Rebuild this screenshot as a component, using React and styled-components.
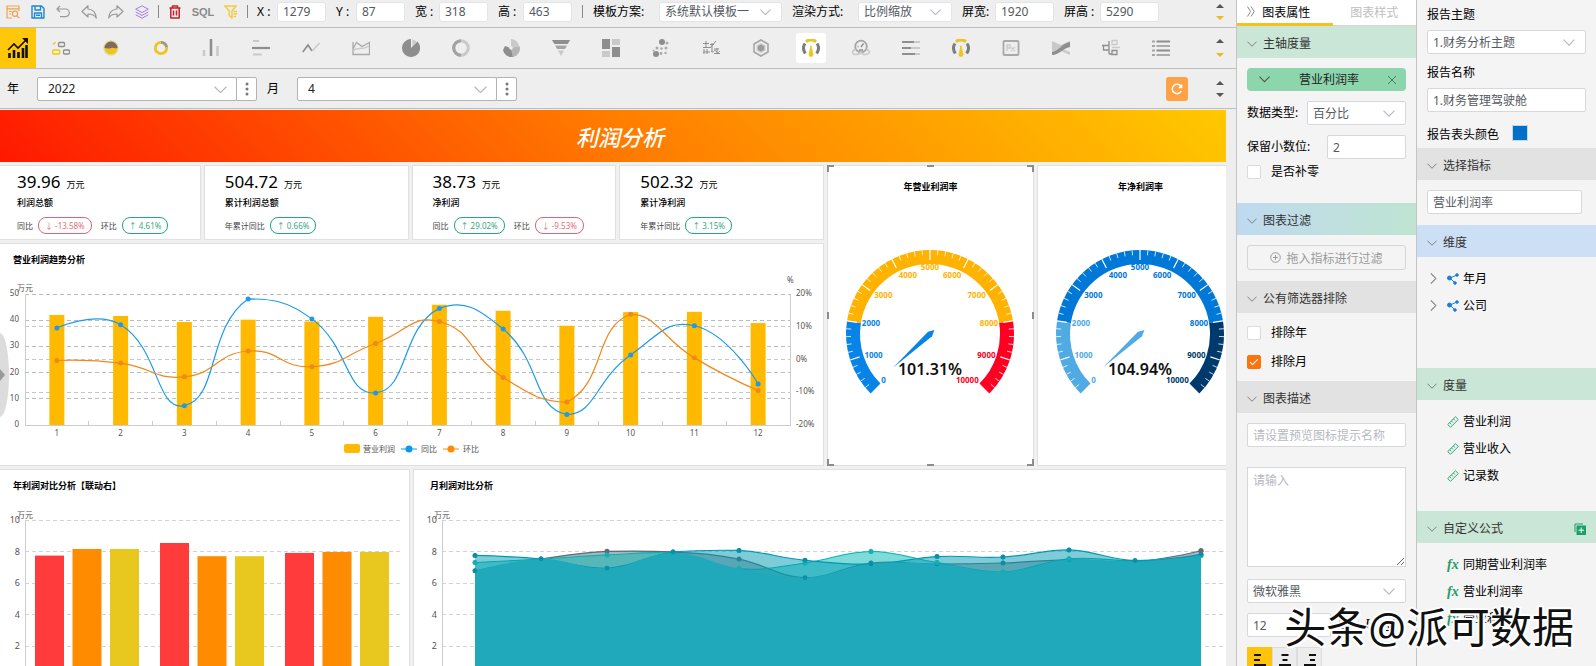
import React from "react";
import styled, { createGlobalStyle, css } from "styled-components";

const GlobalStyle = createGlobalStyle`
  *, *::before, *::after { box-sizing: border-box; }
  html, body { margin: 0; }
  body, button, input, select, textarea {
    font-family: "Noto Sans", "Noto Sans CJK SC", sans-serif;
    font-size: 12px;
    color: #000;
  }
  body { background: #eee; overflow: hidden; }
  h1, h2, p { margin: 0; }
  svg { display: block; }
`;

/* ---------- shell ---------- */
const Shell = styled.div`
  position: relative;
  display: flex;
  height: 100vh;
  overflow: hidden;
  line-height: 16px;
`;
const Main = styled.main`
  flex: 1;
  min-width: 0;
  display: flex;
  flex-direction: column;
  background: #eee;
`;
const Bar = styled.div`
  flex: none;
  display: flex;
  align-items: center;
  height: ${(p) => p.$h}px;
  border-bottom: 1px solid #bdbdbd;
  padding-right: 9px;
`;
const ToolBar = styled(Bar)`
  padding-left: 6px;
  padding-bottom: 4px;
`;
const ToolGroup = styled.div`
  display: flex;
  align-items: center;
  gap: 11px;
`;
const plainButton = css`
  display: flex;
  align-items: center;
  justify-content: center;
  border: 0;
  padding: 0;
  background: none;
`;
const ToolButton = styled.button`
  ${plainButton}
  width: ${(p) => p.$w || 14}px;
  height: 18px;
`;
const SqlLabel = styled.span`
  font-family: "Liberation Sans Narrow", "Liberation Sans", sans-serif;
  font-size: 11px;
  font-weight: 700;
  color: #8a8a8a;
`;
const Divider = styled.span`
  width: 1px;
  height: 13px;
  margin: 0 ${(p) => p.$gap}px;
  background: #888;
`;
const Fields = styled.div`
  display: flex;
  align-items: center;
  gap: 10px;
`;
const FieldLabel = styled.label`
  display: flex;
  align-items: center;
  white-space: nowrap;
`;
const FieldName = styled.span`
  width: ${(p) => p.$w}px;
`;
const TextBox = styled.input`
  display: block;
  flex: none;
  width: ${(p) => (p.$w ? p.$w + "px" : "100%")};
  height: ${(p) => p.$h || 24}px;
  padding: 0 5px;
  border: 1px solid ${(p) => p.$line || "#d6d8dc"};
  border-radius: ${(p) => p.$r || 2}px;
  background: #fff;
  color: #555a62;
  outline: 0;
  &::placeholder { color: #b6b9bf; }
`;
const SelectWrap = styled.span`
  position: relative;
  display: block;
  width: ${(p) => (p.$w ? p.$w + "px" : "100%")};
  svg { position: absolute; right: ${(p) => p.$arrow || 11}px; top: 50%; margin-top: -3px; pointer-events: none; }
`;
const SelectBox = styled.select`
  display: block;
  appearance: none;
  width: 100%;
  height: ${(p) => p.$h || 24}px;
  padding: 0 5px;
  border: 1px solid ${(p) => p.$line || "#d6d8dc"};
  border-radius: ${(p) => p.$r || 2}px;
  background: #fff;
  color: ${(p) => p.$ink || "#555a62"};
  outline: 0;
  padding-left: ${(p) => p.$pad || 5}px;
`;
const Spinner = styled.div`
  margin-left: auto;
  display: flex;
  flex-direction: column;
  align-items: center;
  gap: ${(p) => p.$gap}px;
  width: 14px;
`;
const SpinButton = styled.button`
  ${plainButton}
  width: 14px;
  height: 4px;
`;

const Chevron = ({ w = 12, color = "#b4b8be" }) => (
  <svg width={w} height={w / 2 + 1} viewBox="0 0 12 7" fill="none" stroke={color} strokeWidth="1.1">
    <path d="M0.5 0.7 6 6.2 11.5 0.7" />
  </svg>
);
const ExpandArrow = () => (
  <svg width="10" height="11" viewBox="-3 0 10 12" fill="none" stroke="#777" strokeWidth="1.1"><path d="M0.7 0.5 6.2 6 0.7 11.5" /></svg>
);

function Select({ id, value, w, arrow, aw, label, ...rest }) {
  return (
    <SelectWrap $w={w} $arrow={arrow}>
      <SelectBox id={id} defaultValue={value} aria-label={label} {...rest}>
        <option>{value}</option>
      </SelectBox>
      <Chevron w={aw} />
    </SelectWrap>
  );
}

function UpDown({ gap, up = "#555", down = "#e8bc1c" }) {
  return (
    <Spinner $gap={gap}>
      <SpinButton aria-label="上移"><svg width="8" height="4"><path d="M4 0 8 4H0z" fill={up} /></svg></SpinButton>
      <SpinButton aria-label="下移"><svg width="8" height="4"><path d="M0 0H8L4 4z" fill={down} /></svg></SpinButton>
    </Spinner>
  );
}

/* ---------- top tool icons ---------- */
const Line = ({ c, w = 14, children, sw = 1.2 }) => (
  <svg width={w} height="14" viewBox={`0 0 ${w} 14`} fill="none" stroke={c} strokeWidth={sw} strokeLinejoin="round">{children}</svg>
);
const editTools = [
  ["预览", 14, <Line c="#f0a24a"><path d="M13 6V1H1v12h5M1 3.8h12M3 6.5h3M3 9h2" /><circle cx="9" cy="8.7" r="2.6" /><path d="m11 10.8 2.3 2.4" /></Line>],
  ["保存", 14, <Line c="#1e88d0" sw={1.4}><path d="M1 1h9.5L13 3.500V13H1zM4 1v4h5.500V1M3.500 13V8h7v5M5 10.200h4" /></Line>],
  ["撤销", 14, <Line c="#999"><path d="M4 .8 1 4l3 3M1 4h8.500a3.800 3.800 0 0 1 0 7.600H4" /></Line>],
  ["后退", 16, <Line c="#999" w={16}><path d="M7 .8 1 6.500l6 5.500V9c4 0 6.500 1 8.300 4C15 8.500 12.500 4.500 7 4z" /></Line>],
  ["前进", 16, <Line c="#999" w={16}><path d="m9 .8 6 5.700L9 12V9C5 9 2.500 10 .7 13 1 8.500 3.500 4.500 9 4z" /></Line>],
  ["图层", 14, <Line c="#a47be0" sw={1}><path d="M7 .8 13.300 4.200 7 7.600.7 4.200zM.7 7 7 10.400 13.300 7M.7 9.800 7 13.200l6.300-3.400" /></Line>],
];
const TrashIcon = () => <Line c="#c8202c" sw={1.5}><path d="M1.500 3h11M4.500 2.800V1h5v1.800M2.800 3v10h8.400V3M5.500 5.500v5M8.500 5.500v5" /></Line>;
const FilterIcon = () => <Line c="#f0cc3c" sw={1.4}><path d="M.8 1h11.400L8 5.800V13L5.200 10.500V5.800zM9.500 6.500H13M9.500 9H13M9.500 11.500H12" /></Line>;

/* ---------- chart type icons ---------- */
const G = "#8e8e8e";
const L = "#c9c9c9";
const Y = "#ecc51e";
const Ic = ({ children }) => <svg width="18" height="18" viewBox="0 0 18 18" fill="none" stroke={G} strokeWidth="1.3">{children}</svg>;
const GaugeIcon = () => (
  <Ic>
    <path d="M4 2.600Q9 -.6 14 2.600" stroke={Y} strokeWidth="3.200" />
    <path d="M3 4.500Q-.2 9 3.300 14.500M15 4.500Q18.200 9 14.700 14.500" stroke="#7d7d7d" strokeWidth="3" />
    <path d="M9 6.500l2 9a2 2 0 0 1-4 0z" fill={Y} stroke={Y} strokeWidth=".8" />
  </Ic>
);
const chartTypes = [
  ["组合", <Ic><rect x="6.500" y="3.500" width="6" height="4" rx="1" /><rect x="11.500" y="11" width="6" height="4" rx="1" /><rect x=".7" y="11" width="7" height="4" rx="1" stroke={Y} fill="#fff3b8" /><path d="M1 5.500 3.500 3" stroke={Y} /></Ic>],
  ["水球图", <Ic><circle cx="9" cy="9" r="7" fill={Y} stroke="#e6d9a0" /><path d="M2.500 9a6.500 6.500 0 0 1 13 0c-3 1-4-.8-6.500 0s-4 .5-6.500 0z" fill="#806a60" stroke="none" /></Ic>],
  ["环形进度", <Ic><circle cx="9" cy="9" r="5.700" stroke={Y} strokeWidth="2.800" /><path d="M9 3.300A5.700 5.700 0 0 1 14.600 8" stroke="#999" strokeWidth="2.800" /></Ic>],
  ["柱状图", <Ic><path d="M2 11v6M15.500 7v10" stroke={L} strokeWidth="2.500" /><path d="M9 0v17" strokeWidth="2.500" /></Ic>],
  ["条形图", <Ic><path d="M1 2h6M1 15.500h9" stroke={L} strokeWidth="2" /><path d="M0 9h18" strokeWidth="2.200" /></Ic>],
  ["折线图", <Ic><path d="M.8 13 6 6l4 6" strokeWidth="1.700" /><path d="m10 12 7.500-8" stroke={L} strokeWidth="1.700" /></Ic>],
  ["面积图", <Ic><path d="M1 3v12.500h16.500V3.500L10 7.500 4.500 3.500 1 10" stroke="#a9a9a9" /><path d="M1 12c4-5 9 0 16-5" stroke={L} /></Ic>],
  ["饼图", <Ic><path d="M9 9V0a9 9 0 1 0 6.400 2.600z" fill={G} stroke="none" /><path d="M10.500 7V.6a8 8 0 0 1 4 2.200z" fill={L} stroke="none" /></Ic>],
  ["圆环图", <Ic><circle cx="9" cy="9" r="7.300" stroke={L} strokeWidth="3" /><path d="M9 16.300a7.300 7.300 0 0 1 0-14.600" strokeWidth="3" stroke="#a2a2a2" /></Ic>],
  ["玫瑰图", <Ic><path d="M9 9V0a8 8 0 0 1 8 7z" fill={L} stroke="none" /><path d="M9 9l8.500-2A8.500 8.500 0 0 1 11 18z" fill="#b5b5b5" stroke="none" /><path d="M9 9l2 9A8.500 8.500 0 0 1 1 11l2-4z" fill={G} stroke="none" /><circle cx="9" cy="9" r="1.800" fill="#eee" stroke="none" /></Ic>],
  ["漏斗图", <Ic><path d="M0 1h18l-2.300 4H2.300z" fill={G} stroke="none" /><path d="M3 6.500h12L13 10H5z" fill="#a5a5a5" stroke="none" /><path d="M6 11.500h6L9 17z" fill={L} stroke="none" /></Ic>],
  ["矩形树图", <Ic><path d="M0 0h8v10H0zM10 8h8v10h-8z" fill={G} stroke="none" /><path d="M10 0h8v6h-8zM0 12h8v6H0z" fill={L} stroke="none" /></Ic>],
  ["散点图", <Ic><g stroke="none" fill={G}><circle cx="10" cy="3" r="3" /><circle cx="4" cy="15" r="3" /></g><g stroke="none" fill="#aaa"><circle cx="15" cy="4" r="1.500" /><circle cx="5" cy="9" r="1.500" /><circle cx="9.500" cy="9.500" r="1.300" /><circle cx="14" cy="9" r="1.500" /><circle cx="9" cy="14.500" r="1.400" /><circle cx="13.500" cy="14" r="1.200" /><circle cx="1.500" cy="11.500" r="1" /></g></Ic>],
  ["词云", <Ic><path d="M1 4.500h6M4 2v6M1 8.500h7M8 9l6-7M8 5.500h4M10 4v9M1 13h7M2 10v5M5 10v5M9 12c2 3 3-2 5 0s2 2 4 0M12 14.500h6M15 9v6M12 10h5" strokeWidth="1" /></Ic>],
  ["雷达图", <Ic><path d="M9 1l7 4v8l-7 4-7-4V5z" stroke="#a5a5a5" strokeWidth="1.600" /><path d="M9 4.800l3.800 2.100v4.200L9 13.200l-3.800-2.100V6.900z" fill="#9b9b9b" stroke={L} /></Ic>],
  ["仪表盘", <GaugeIcon />],
  ["速度表", <Ic><circle cx="9" cy="7.500" r="5.800" stroke="#a5a5a5" strokeWidth="1.800" /><path d="M9 8l2.500-3.500M5.500 7.500h1M7 11h4" /><path d="M3.500 10.500c-5 2-3 5.500 1 5S9 12.500 9 12.500s.5 3.500 4.500 3 6-3 1-5" stroke={L} strokeWidth="1.600" /></Ic>],
  ["进度条", <Ic><path d="M0 3h12M0 9h9M0 15h13" strokeWidth="2.200" /><path d="M12 3h6M9 9h9M13 15h5" stroke={L} strokeWidth="2.200" /></Ic>],
  ["仪表组", <GaugeIcon />],
  ["文本框", <Ic><rect x="1.500" y="2" width="15" height="14" rx="1" stroke="#a9a9a9" strokeWidth="1.800" /><path d="M5 12V6h3v3H5M9 12l4-4M9.500 8.500 13 12" stroke={L} /></Ic>],
  ["桑基图", <Ic><path d="M0 2l9 4 9-4v4l-7 4 7 3v3L9 12l-9 4z" fill={L} stroke="none" /><path d="M0 13c6 0 10-9 18-10v5c-7 1-11 8-18 8z" fill={G} stroke="none" /></Ic>],
  ["组织树", <Ic><path d="M0 6.500h7v4.500H1.500V6.500M7 2v13M7 15h3" /><path d="M10 1.500h5v4h-5zM10 8.500h8" stroke={L} /><path d="M10 11.500h5v4h-5z" /></Ic>],
  ["列表", <Ic><path d="M0 2.500h3M0 7h3M0 11.500h3M0 16h3" stroke="#a5a5a5" strokeWidth="1.800" /><path d="M4.500 2.500H18M4.500 11.500H18" strokeWidth="2" /><path d="M4.500 7H18M4.500 16H18" stroke="#ababab" strokeWidth="2" /></Ic>],
];
const ChartTile = styled.button`
  ${plainButton}
  width: 36px;
  height: 40px;
  margin-right: 10px;
  background: #ffc70a;
`;
const TypeList = styled.div`
  display: flex;
  gap: 20px;
`;
const TypeButton = styled.button`
  ${plainButton}
  width: 30px;
  height: 30px;
  border-radius: 3px;
  background: ${(p) => (p.$on ? "#fff" : "none")};
`;

/* ---------- filter bar ---------- */
const FilterBar = styled(Bar)`
  padding-left: 7px;
`;
const FilterField = styled.div`
  display: flex;
  align-items: center;
  margin-right: 10px;
  label { width: 30px; }
`;
const MoreButton = styled.button`
  ${plainButton}
  width: 21px;
  height: 24px;
  margin-left: -1px;
  background: #fff;
  border: 1px solid #b3b3b3;
  border-radius: 0 2px 2px 0;
`;
const RefreshButton = styled.button`
  ${plainButton}
  width: 22px;
  height: 24px;
  margin-left: auto;
  margin-right: 25px;
  border-radius: 3px;
  background: #ffa145;
`;
const FilterSpin = styled.div`
  display: flex;
`;

/* ---------- dashboard ---------- */
const Stage = styled.div`
  position: relative;
  flex: 1;
  min-height: 0;
  margin-right: 10px;
  padding-top: 1px;
  overflow: hidden;
  background: #f0f0f0;
`;
const Canvas = styled.div`
  display: flex;
  flex-direction: column;
  gap: 3px;
  width: calc(100% + 22px);
  margin-left: -4px;
`;
const Banner = styled.h1`
  height: 52px;
  line-height: 54px;
  text-align: center;
  color: #fff;
  font-size: 22px;
  font-weight: 500;
  font-style: italic;
  background: linear-gradient(45deg, #ff1800 0%, #ff7c00 50%, #ffc800 98%);
`;
const Row = styled.div`
  display: flex;
  gap: 3px;
`;
const Column = styled.div`
  flex: 1;
  min-width: 0;
  display: flex;
  flex-direction: column;
  gap: 3px;
`;
const Card = styled.section`
  position: relative;
  flex: ${(p) => (p.$w ? `0 0 ${p.$w}px` : "1")};
  min-width: 0;
  background: #fff;
  border: 1px solid #e0e0e0;
  svg { overflow: visible; }
`;
const CardTitle = styled.h2`
  height: ${(p) => p.$h || 32}px;
  line-height: ${(p) => p.$h || 32}px;
  padding-left: ${(p) => (p.$center ? 0 : 16)}px;
  text-align: ${(p) => (p.$center ? "center" : "left")};
  font-size: 9px;
  font-weight: 700;
`;
const KpiGrid = styled.div`
  display: grid;
  grid-template-columns: repeat(4, 1fr);
  gap: 3px;
`;
const Kpi = styled(Card)`
  display: flex;
  flex-direction: column;
  height: 75px;
  padding: 6px 0 0 20px;
`;
const KpiValue = styled.p`
  font-size: 17px;
  line-height: 20px;
  small { margin-left: 6px; font-size: 9px; }
`;
const KpiName = styled.p`
  font-size: 9px;
  line-height: 16px;
  font-weight: 500;
`;
const KpiRates = styled.div`
  display: flex;
  align-items: center;
  gap: 5px;
  margin-top: 6px;
  font-size: 8px;
  line-height: 15px;
  color: #444;
`;
const Rate = styled.span`
  height: 17px;
  padding: 0 6px;
  margin-right: 4px;
  border: 1px solid ${(p) => (p.$up ? "#1fa97c" : "#d9667a")};
  border-radius: 8px;
  color: ${(p) => (p.$up ? "#3aa882" : "#e0707c")};
`;
const DrawerHandle = styled.button`
  ${plainButton}
  position: absolute;
  left: 0;
  top: 224px;
  width: 9px;
  height: 84px;
  justify-content: flex-start;
  background: #dcdcdc;
  border-radius: 0 9px 9px 0 / 0 42px 42px 0;
`;
const Grip = styled.i`
  position: absolute;
  width: ${(p) => (p.$edge === "y" ? 2 : 7)}px;
  height: ${(p) => (p.$edge === "x" ? 2 : 7)}px;
  ${(p) => p.$edge && "background: #8d8d8d;"}
  ${(p) => (p.$t ? "top: -1px;" : p.$b ? "bottom: -1px;" : "top: calc(50% - 4px);")}
  ${(p) => (p.$l ? "left: -1px;" : p.$r ? "right: -1px;" : "left: calc(50% - 4px);")}
  ${(p) => !p.$edge && css`
    border: 0 solid #8d8d8d;
    border-top-width: ${p.$t ? 2 : 0}px;
    border-bottom-width: ${p.$b ? 2 : 0}px;
    border-left-width: ${p.$l ? 2 : 0}px;
    border-right-width: ${p.$r ? 2 : 0}px;
  `}
`;
const Plot = styled.svg`
  width: 100%;
  height: auto;
  font-size: ${(p) => p.$font || 8}px;
  fill: #555;
`;
const GridLine = styled.path`
  fill: none;
  stroke: ${(p) => p.$c || "#ccc"};
  stroke-dasharray: ${(p) => (p.$solid ? "none" : "4 3")};
  shape-rendering: crispEdges;
`;

const kpis = [
  ["39.96", "利润总额", [["同比", false, "-13.58%"], ["环比", true, "4.61%"]]],
  ["504.72", "累计利润总额", [["年累计同比", true, "0.66%"]]],
  ["38.73", "净利润", [["同比", true, "29.02%"], ["环比", false, "-9.53%"]]],
  ["502.32", "累计净利润", [["年累计同比", true, "3.15%"]]],
];

// Cubic smoothing whose control points stay inside the bounding box of the series.
function smoothPath(pts, smooth = 0.5) {
  const xs = pts.map((p) => p[0]);
  const ys = pts.map((p) => p[1]);
  const clamp = ([x, y]) => [
    Math.min(Math.max(x, Math.min(...xs)), Math.max(...xs)),
    Math.min(Math.max(y, Math.min(...ys)), Math.max(...ys)),
  ];
  let d = `M${pts[0].join(" ")}`;
  let cp0 = pts[0];
  for (let i = 1; i < pts.length; i++) {
    const p = pts[i];
    const prev = pts[i - 1];
    const next = pts[i + 1];
    let cp1 = p;
    let nextCp = p;
    if (next) {
      const a = Math.hypot(p[0] - prev[0], p[1] - prev[1]);
      const b = Math.hypot(next[0] - p[0], next[1] - p[1]);
      const r = b / (a + b);
      const v = [next[0] - prev[0], next[1] - prev[1]];
      cp1 = clamp([p[0] - v[0] * smooth * (1 - r), p[1] - v[1] * smooth * (1 - r)]);
      nextCp = clamp([p[0] + v[0] * smooth * r, p[1] + v[1] * smooth * r]);
    }
    d += `C${cp0.join(" ")} ${cp1.join(" ")} ${p.join(" ")}`;
    cp0 = nextCp;
  }
  return d;
}

const trend = {
  profit: [42, 41.6, 39.3, 40.2, 39.5, 41.3, 45.9, 43.6, 37.9, 43.1, 43.2, 38.9],
  yoy: [9.6, 10.6, -14.1, 18.5, 12.4, -10.2, 15.6, 9.3, -16.8, 1.4, 10.3, -7.5],
  mom: [-0.3, -1.1, -5.3, 2.6, -2.2, 4.9, 11.6, -5.5, -13, 13.8, 0.5, -9.5],
};

function TrendChart() {
  const x0 = 28, x1 = 793, top = 18, bottom = 149;
  const step = (x1 - x0) / 12;
  const cx = (i) => x0 + step * (i + 0.5);
  const yL = (v) => bottom - (v / 50) * (bottom - top);
  const yR = (v) => bottom - ((v + 20) / 40) * (bottom - top);
  const line = (vals) => vals.map((v, i) => [cx(i), yR(v)]);
  return (
    <Plot viewBox="0 0 826 189" role="img" aria-label="营业利润趋势分析">
      {[10, 20, 30, 40, 50].map((v) => <GridLine key={v} d={`M${x0} ${yL(v)}H${x1}`} $c="#bbb" />)}
      {[-10, 0, 10].map((v) => <GridLine key={v} d={`M${x0} ${yR(v)}H${x1}`} $c="#c8c8c8" />)}
      <GridLine $solid d={`M${x0} ${top}V${bottom}H${x1}V${top}`} />
      {trend.profit.map((v, i) => (
        <g key={i}>
          {i > 0 && <GridLine $solid d={`M${x0 + step * i} ${bottom}v-4`} />}
          <rect x={cx(i) - 7.5} y={yL(v)} width="15" height={bottom - yL(v)} fill="#ffb900" />
          <text x={cx(i)} y={bottom + 11} textAnchor="middle">{i + 1}</text>
        </g>
      ))}
      {[[trend.yoy, "#1e9be8"], [trend.mom, "#f0881c"]].map(([vals, c]) => (
        <g key={c}>
          <path d={smoothPath(line(vals))} fill="none" stroke={c} strokeWidth="1.200" />
          {line(vals).map(([x, y]) => <circle key={x} cx={x} cy={y} r="2.500" fill={c} />)}
        </g>
      ))}
      {[0, 10, 20, 30, 40, 50].map((v) => <text key={v} x="22" y={yL(v) + 2} textAnchor="end">{v}</text>)}
      {[-20, -10, 0, 10, 20].map((v) => <text key={v} x="799" y={yR(v) + 2}>{v}%</text>)}
      <text x="20" y="15">万元</text>
      <text x="790" y="7">%</text>
      <rect x="347" y="168" width="16" height="9" rx="2" fill="#ffb900" />
      <text x="366" y="176">营业利润</text>
      <path d="M404 173h16" stroke="#0a9be6" /><circle cx="412" cy="173" r="3.500" fill="#0a9be6" />
      <text x="424" y="176">同比</text>
      <path d="M446 173h16" stroke="#ff8c00" /><circle cx="454" cy="173" r="3.500" fill="#ff8c00" />
      <text x="466" y="176">环比</text>
    </Plot>
  );
}

function Gauge({ rate, colors, label }) {
  const cx = 102, cy = 127, R = 84, W = 14;
  const rad = (v) => ((225 - v * 270) * Math.PI) / 180;
  const at = (v, r) => [cx + Math.cos(rad(v)) * r, cy - Math.sin(rad(v)) * r];
  const arc = (a, b) => {
    const big = (b - a) * 270 > 180 ? 1 : 0;
    const n = R - W;
    return `M${at(a, R)}A${R} ${R} 0 ${big} 1 ${at(b, R)}L${at(b, n)}A${n} ${n} 0 ${big} 0 ${at(a, n)}Z`;
  };
  const pick = (v) => (v <= 0.2 ? colors[0] : v <= 0.8 ? colors[1] : colors[2]);
  const a = rad(parseFloat(rate) / 10000);
  const c = Math.cos(a), s = -Math.sin(a);
  const needle = [[cx - c * 6, cy - s * 6], [cx - s * 3, cy + c * 3], [cx + c * 50, cy + s * 50], [cx + s * 3, cy - c * 3]];
  return (
    <Plot viewBox="0 0 205 256" role="img" aria-label={label}>
      <path d={arc(0, 0.2)} fill={colors[0]} />
      <path d={arc(0.2, 0.8)} fill={colors[1]} />
      <path d={arc(0.8, 1)} fill={colors[2]} />
      {Array.from({ length: 49 }, (_, k) => k + 1).map((k) => (
        <path key={k} d={`M${at(k / 50, R)}L${at(k / 50, k % 5 ? R - 5 : R - 10)}`} stroke="#fff" strokeWidth={k % 5 ? 0.8 : 1.2} />
      ))}
      {Array.from({ length: 11 }, (_, k) => k).map((k) => {
        const ux = Math.cos(rad(k / 10)), uy = -Math.sin(rad(k / 10));
        const [x, y] = at(k / 10, 69);
        return (
          <text key={k} x={x} y={y + (uy < -0.4 ? 5 : uy > 0.4 ? 0 : 3)} textAnchor={ux < -0.4 ? "start" : ux > 0.4 ? "end" : "middle"}
            fill={pick(k / 10)} fontWeight="700">{k * 1000}</text>
        );
      })}
      <path d={`M${needle.join("L")}Z`} fill={colors[0]} />
      <text x={cx} y="168" textAnchor="middle" fill="#111" fontSize="16" fontWeight="600">{rate}</text>
    </Plot>
  );
}

const yearBars = [[7.74, 8.16, 8.16], [8.54, 7.7, 7.7], [7.91, 7.97, 7.97]];
const barColors = ["#ff3b3b", "#ff8c00", "#e8c81e"];
const GRID = { top: 18, unit: 15.75 };
const valueY = (v) => GRID.top + (10 - v) * GRID.unit;

function ValueAxis({ x0, x1 }) {
  return (
    <>
      {[2, 4, 6, 8, 10].map((v) => (
        <g key={v}>
          <GridLine d={`M${x0} ${valueY(v)}H${x1}`} $c="#d2d2d2" />
          <text x={x0 - 5} y={valueY(v) + 3} textAnchor="end">{v}</text>
        </g>
      ))}
      <GridLine $solid d={`M${x0} ${GRID.top}V${valueY(0)}`} />
      <text x={x0 - 8} y="16" fontSize="8">万元</text>
    </>
  );
}

function YearChart() {
  return (
    <Plot viewBox="0 0 412 180" $font={9} role="img" aria-label="年利润对比分析">
      <ValueAxis x0={28} x1={403} />
      {yearBars.map((g, i) => g.map((v, j) => (
        <rect key={`${i}${j}`} x={28 + i * 125 + 10 + j * 37.5} y={valueY(v)} width="29" height={valueY(0) - valueY(v)} fill={barColors[j]} />
      )))}
    </Plot>
  );
}

const areas = [
  ["#5d6a78", 0.5, [6.78, 7.52, 8.01, 7.97, 7.52, 6.33, 7.27, 7.2, 7.27, 7.47, 7.35, 8.05]],
  ["#00b7b5", 0.5, [7.3, 7.52, 7.78, 7.9, 6.9, 7.27, 8.0, 7.3, 6.7, 7.54, 7.42, 7.74]],
  ["#0099b4", 0.5, [7.75, 7.52, 6.93, 7.97, 8.07, 7.44, 7.2, 7.68, 7.65, 8.1, 7.42, 7.82]],
];

function MonthChart() {
  const x0 = 28, step = 66;
  const shapes = areas.map(([c, o, vals]) => {
    const pts = vals.map((v, i) => [x0 + step * (i + 0.5), valueY(v)]);
    return { c, o, pts, d: smoothPath(pts, 0.4) };
  });
  const floor = shapes[0].pts.map(([x], i) => [x, valueY(Math.min(...areas.map((s) => s[2][i])))]);
  return (
    <Plot viewBox="0 0 829 180" $font={9} role="img" aria-label="月利润对比分析">
      <ValueAxis x0={x0} x1={822} />
      {shapes.map(({ c, o, pts, d }) => (
        <g key={c}>
          <path d={`${d}V${valueY(0)}H${pts[0][0]}Z`} fill={c} fillOpacity={o} />
          <path d={d} fill="none" stroke={c} strokeWidth="1.200" />
          {pts.map(([x, y]) => <circle key={x} cx={x} cy={y} r="2.500" fill={c} />)}
        </g>
      ))}
      <path d={`${smoothPath(floor, 0.4)}V${valueY(0)}H${floor[0][0]}Z`} fill="#1fa9bb" />
      {shapes.map(({ c, pts }, k) => (k === 0 ? pts.slice(0, 1).concat(pts.slice(5, 10)) : pts).map(([x, y]) => (
        <circle key={c + x} cx={x} cy={y} r="2.200" fill={k === 1 ? "#14b0b4" : "#0c8fa6"} />
      )))}
      <circle cx={shapes[0].pts[11][0]} cy={shapes[0].pts[11][1]} r="2.500" fill="#5d6a78" />
    </Plot>
  );
}

/* ---------- side panels ---------- */
const Panel = styled.aside`
  flex: none;
  width: ${(p) => p.$w}px;
  background: #f4f4f4;
  border-left: 1px solid #c4c4c4;
`;
const Tabs = styled.div`
  display: flex;
  height: 26px;
  background: #fff;
  border-bottom: 1px solid #d5d5d5;
`;
const Tab = styled.button`
  ${plainButton}
  flex: 1 1 0;
  gap: 7px;
  min-width: 0;
  height: 26px;
  white-space: nowrap;
  color: ${(p) => (p.$on ? "#000" : "#c0c0c0")};
  ${(p) => (p.$on ? "border-bottom: 3px solid #f5c31c; padding: 0 12px 0 0;" : "padding: 0 0 2px;")}
`;
const backgrounds = {
  green: "#c9e6d6",
  grey: "#e2e2e2",
  blue: "#ccdff5",
  mix: "linear-gradient(90deg, #bfdaf0, #bfe4d2)",
};
const SectionHead = styled.h2`
  display: flex;
  align-items: center;
  gap: 6px;
  height: 32px;
  padding: 3px 10px 0;
  background: ${(p) => backgrounds[p.$tone]};
  font-size: 12px;
  font-weight: 400;
  color: #333;
  button { ${plainButton} margin-left: auto; }
`;
const SectionBody = styled.div`
  display: flex;
  flex-direction: column;
  height: ${(p) => p.$h}px;
  padding: 10px 10px 0;
  gap: ${(p) => p.$gap || 0}px;
`;
const Stack = styled.div`
  display: flex;
  flex-direction: column;
  gap: 6px;
`;
const Pill = styled.div`
  display: flex;
  align-items: center;
  justify-content: space-between;
  height: 23px;
  padding: 0 10px 0 12px;
  border-radius: 4px;
  background: #8cd5ad;
  color: #222;
  button { ${plainButton} }
`;
const FormRow = styled.div`
  display: flex;
  align-items: center;
  height: 24px;
  label { white-space: nowrap; width: ${(p) => p.$lw}px; flex: none; }
  input { flex: ${(p) => (p.$lw ? 1 : "none")}; min-width: 0; }
`;
const CheckLabel = styled.label`
  display: flex;
  align-items: center;
  gap: 10px;
  height: ${(p) => p.$h || 14}px;
`;
const Check = styled.input`
  appearance: none;
  position: relative;
  width: 14px;
  height: 14px;
  margin: 0;
  border: 1px solid #d9dbdf;
  border-radius: 2px;
  background: #fff;
  &:checked { background: #fa7510; border-color: #fa7510; }
  &:checked::after {
    content: "";
    position: absolute;
    left: 4px;
    top: 1px;
    width: 4px;
    height: 8px;
    border: solid #fff;
    border-width: 0 1px 1px 0;
    transform: rotate(45deg);
  }
`;
const DropButton = styled.button`
  display: flex;
  align-items: center;
  justify-content: center;
  gap: 5px;
  height: 25px;
  border: 1px solid #d5d5d5;
  border-radius: 3px;
  background: #f4f4f4;
  color: #9a9a9a;
`;
const Notes = styled.textarea`
  display: block;
  width: 100%;
  height: 100px;
  margin: 10px 0 2px;
  padding: 5px;
  border: 1px solid #d6d8dc;
  border-radius: 0;
  line-height: 16px;
  outline: 0;
  &::placeholder { color: #b6b9bf; }
`;
const StyleButton = styled.button`
  ${plainButton}
  width: 24px;
  height: 24px;
  font: ${(p) => p.$font} 14px "Liberation Serif", serif;
  text-decoration: ${(p) => (p.$under ? "underline" : "none")};
`;
const AlignGroup = styled.div`
  display: flex;
`;
const AlignButton = styled.button`
  ${plainButton}
  width: 25px;
  height: 24px;
  border: 1px solid ${(p) => (p.$on ? "#ffc40a" : "#dcdcdc")};
  background: ${(p) => (p.$on ? "#ffc40a" : "#ececec")};
`;
const ReportForm = styled.div`
  display: flex;
  flex-direction: column;
  height: 148px;
  padding: 5px 10px 0 10px;
  > label { flex: none; height: 20px; line-height: 20px; margin-bottom: 5px; }
  > input, > span { margin-bottom: 9px; }
`;
const ColorRow = styled.div`
  display: flex;
  align-items: center;
  gap: 13px;
  padding-top: 4px;
  line-height: 18px;
  input { appearance: none; width: 16px; height: 16px; padding: 0; border: 1px solid #c9d6e4; background: #0070c9; margin: 0 0 4px; }
  input::-webkit-color-swatch-wrapper { padding: 0; }
  input::-webkit-color-swatch { border: 0; }
`;
const Tree = styled.ul`
  list-style: none;
  height: 111px;
  margin: 0;
  padding: 8px 10px 0;
`;
const TreeItem = styled.li`
  display: flex;
  align-items: center;
  height: 27px;
`;
const Slot = styled.span`
  display: flex;
  align-items: center;
  width: ${(p) => p.$w}px;
`;
const Fx = styled.span`
  font: italic 700 14px "Liberation Serif", serif;
  color: #1c9f68;
`;
const Watermark = styled.div`
  position: absolute;
  right: 22px;
  bottom: 9px;
  font-size: 42px;
  line-height: 60px;
  white-space: nowrap;
  color: #111;
  text-shadow: -2px -1px 0 #fff, 2px -1px 0 #fff, -1px 2px 0 #fff, 2px 2px 0 #fff, 0 -2px 0 #fff;
  pointer-events: none;
`;

const ShareIcon = () => (
  <svg width="12" height="12" viewBox="0 0 12 12" fill="#1c7ed6" stroke="#1c7ed6"><path d="M3 5 10 2M3 5l5 5" fill="none" /><circle cx="2.500" cy="5" r="2" /><circle cx="10" cy="2" r="1.300" /><circle cx="8" cy="10" r="1.300" /></svg>
);
const RulerIcon = () => (
  <svg width="12" height="12" viewBox="0 0 12 12" fill="none" stroke="#2aa872"><path d="M8.500.8 11.300 3.500 3.500 11.300.7 8.500zM6.500 3 8 4.500M4.500 5 6 6.500M2.700 6.800l1.500 1.500" /></svg>
);
const Head = ({ tone, children, extra }) => (
  <SectionHead $tone={tone}><Chevron w={10} color="#777" />{children}{extra}</SectionHead>
);
const AlignIcon = ({ x }) => (
  <svg width="12" height="13" viewBox="0 0 12 13" stroke="#111" strokeWidth="1.800"><path d={`M${x} 2h7M${x + (x ? 1 : 0)} 7h${x ? 5 : 6}M0 12h12`} /></svg>
);

export default function App() {
  const sizes = [["X :", 20, "1279", 49], ["Y :", 20, "87", 49], ["宽 :", 24, "318", 49], ["高 :", 25, "463", 49]];
  const screens = [["屏宽:", 33, "1920", 59], ["屏高 :", 36, "5290", 59]];
  const field = ([name, lw, value, w]) => (
    <FieldLabel key={name}>
      <FieldName $w={lw}>{name}</FieldName>
      <TextBox $w={w} $h={20} $r={3} $line="#e2e4e8" defaultValue={value} />
    </FieldLabel>
  );
  return (
    <Shell>
      <GlobalStyle />
      <Main>
        <ToolBar $h={28}>
          <ToolGroup>
            {editTools.map(([name, w, icon]) => <ToolButton key={name} $w={w} aria-label={name}>{icon}</ToolButton>)}
          </ToolGroup>
          <Divider $gap={9} />
          <ToolGroup>
            <ToolButton aria-label="删除"><TrashIcon /></ToolButton>
            <ToolButton $w={20}><SqlLabel>SQL</SqlLabel></ToolButton>
            <ToolButton aria-label="筛选"><FilterIcon /></ToolButton>
          </ToolGroup>
          <Divider $gap={9} />
          <Fields>
            {sizes.map(field)}
            <Divider $gap={0} />
            <FieldLabel><FieldName $w={66}>模板方案:</FieldName><Select value="系统默认模板一" w={123} aw={11} $h={20} $r={3} $line="#e2e4e8" /></FieldLabel>
            <FieldLabel><FieldName $w={66}>渲染方式:</FieldName><Select value="比例缩放" w={94} aw={11} $h={20} $r={3} $line="#e2e4e8" /></FieldLabel>
            {screens.map(field)}
          </Fields>
          <UpDown gap={8} />
        </ToolBar>
        <Bar $h={41}>
          <ChartTile aria-label="图表">
            <svg width="22" height="22" viewBox="0 0 22 22" fill="none" stroke="#111" strokeWidth="2.600">
              <path d="M2.500 16v5M7 13v8M11.500 15v6M16 11v10M19.500 8v13" />
              <path d="M1 13 7 7l4 4 8-8" strokeWidth="1.600" /><path d="M15 1h6v6z" fill="#111" stroke="none" />
            </svg>
          </ChartTile>
          <TypeList>
            {chartTypes.map(([name, icon]) => <TypeButton key={name} aria-label={name} $on={name === "仪表盘"}>{icon}</TypeButton>)}
          </TypeList>
          <UpDown gap={10} />
        </Bar>
        <FilterBar $h={40}>
          {[["年", "year", "2022"], ["月", "month", "4"]].map(([name, id, value]) => (
            <FilterField key={id}>
              <label htmlFor={id}>{name}</label>
              <Select id={id} value={value} w={200} $line="#b3b3b3" $ink="#222" $pad={10} arrow={10} aw={13} />
              <MoreButton aria-label="更多">
                <svg width="4" height="14" fill="#777"><circle cx="2" cy="2" r="1.500" /><circle cx="2" cy="7" r="1.500" /><circle cx="2" cy="12" r="1.500" /></svg>
              </MoreButton>
            </FilterField>
          ))}
          <RefreshButton aria-label="刷新">
            <svg width="12" height="12" viewBox="0 0 12 12" fill="none" stroke="#fff" strokeWidth="1.500"><path d="M10.200 8A4.700 4.700 0 1 1 10 3.500" /><path d="M11.300.8v4.400H7z" fill="#fff" stroke="none" /></svg>
          </RefreshButton>
          <FilterSpin><UpDown gap={8} down="#555" /></FilterSpin>
        </FilterBar>

        <Stage>
          <Canvas>
            <Banner>利润分析</Banner>
            <Row>
              <Column>
                <KpiGrid>
                  {kpis.map(([value, name, rates]) => (
                    <Kpi key={name}>
                      <KpiValue>{value}<small>万元</small></KpiValue>
                      <KpiName>{name}</KpiName>
                      <KpiRates>
                        {rates.map(([label, up, text]) => (
                          <React.Fragment key={label}>
                            <span>{label}</span>
                            <Rate $up={up}>{up ? "↑" : "↓"} {text}</Rate>
                          </React.Fragment>
                        ))}
                      </KpiRates>
                    </Kpi>
                  ))}
                </KpiGrid>
                <Card>
                  <CardTitle>营业利润趋势分析</CardTitle>
                  <TrendChart />
                </Card>
              </Column>
              <Card $w={207}>
                <CardTitle $center $h={41}>年营业利润率</CardTitle>
                <Gauge rate="101.31%" label="年营业利润率" colors={["#0884e8", "#ffb300", "#ff0022"]} />
                <Grip $t $l /><Grip $t $r /><Grip $b $l /><Grip $b $r />
                <Grip $edge="x" $t /><Grip $edge="x" $b /><Grip $edge="y" $l /><Grip $edge="y" $r />
              </Card>
              <Card $w={207}>
                <CardTitle $center $h={41}>年净利润率</CardTitle>
                <Gauge rate="104.94%" label="年净利润率" colors={["#50abe4", "#0078d7", "#003a6c"]} />
              </Card>
            </Row>
            <Row>
              <Card $w={414}>
                <CardTitle>年利润对比分析【联动右】</CardTitle>
                <YearChart />
              </Card>
              <Card>
                <CardTitle>月利润对比分析</CardTitle>
                <MonthChart />
              </Card>
            </Row>
          </Canvas>
          <DrawerHandle aria-label="展开">
            <svg width="5" height="12"><path d="M0 0 5 6 0 12z" fill="#999" /></svg>
          </DrawerHandle>
        </Stage>
      </Main>

      <Panel $w={180}>
        <Tabs>
          <Tab $on>
            <svg width="8" height="11" viewBox="0 0 8 11" fill="none" stroke="#888"><path d="M.5.5 3.500 5.500.5 10.500M4 .5 7.200 5.500 4 10.500" /></svg>
            图表属性
          </Tab>
          <Tab>图表样式</Tab>
        </Tabs>
        <Head tone="green">主轴度量</Head>
        <SectionBody $h={145} $gap={10}>
          <Pill>
            <Chevron w={11} color="#555" />
            <span>营业利润率</span>
            <button aria-label="移除"><svg width="8" height="8" stroke="#4c7c60"><path d="M0 0 8 8M8 0 0 8" /></svg></button>
          </Pill>
          <FormRow $lw={60}>
            <label htmlFor="dtype">数据类型:</label>
            <Select id="dtype" value="百分比" />
          </FormRow>
          <Stack>
            <FormRow $lw={80}>
              <label htmlFor="digits">保留小数位:</label>
              <TextBox id="digits" defaultValue="2" />
            </FormRow>
            <CheckLabel><Check type="checkbox" />是否补零</CheckLabel>
          </Stack>
        </SectionBody>
        <Head tone="mix">图表过滤</Head>
        <SectionBody $h={46}>
          <DropButton>
            <svg width="11" height="11" fill="none" stroke="#9a9a9a"><circle cx="5.500" cy="5.500" r="4.800" /><path d="M3 5.500h5M5.500 3v5" /></svg>
            拖入指标进行过滤
          </DropButton>
        </SectionBody>
        <Head tone="grey">公有筛选器排除</Head>
        <SectionBody $h={68} $gap={9}>
          <CheckLabel $h={20}><Check type="checkbox" />排除年</CheckLabel>
          <CheckLabel $h={20}><Check type="checkbox" defaultChecked />排除月</CheckLabel>
        </SectionBody>
        <Head tone="grey">图表描述</Head>
        <SectionBody $gap={10}>
          <TextBox placeholder="请设置预览图标提示名称" aria-label="提示名称" />
          <Notes placeholder="请输入" aria-label="描述" />
          <Select value="微软雅黑" label="字体" />
          <FormRow>
            <TextBox $w={84} defaultValue="12" aria-label="字号" />
            <StyleButton $font="700">B</StyleButton>
            <StyleButton $font="italic 400">I</StyleButton>
            <StyleButton $font="400" $under>U</StyleButton>
          </FormRow>
          <AlignGroup>
            <AlignButton $on aria-label="左对齐"><AlignIcon x={0} /></AlignButton>
            <AlignButton aria-label="居中"><AlignIcon x={2.5} /></AlignButton>
            <AlignButton aria-label="右对齐"><AlignIcon x={5} /></AlignButton>
          </AlignGroup>
        </SectionBody>
      </Panel>

      <Panel $w={180}>
        <ReportForm>
          <label htmlFor="theme">报告主题</label>
          <Select id="theme" value="1.财务分析主题" />
          <label htmlFor="rname">报告名称</label>
          <TextBox id="rname" defaultValue="1.财务管理驾驶舱" />
          <ColorRow><label htmlFor="hcolor">报告表头颜色</label><input id="hcolor" type="color" defaultValue="#0070c9" /></ColorRow>
        </ReportForm>
        <Head tone="grey">选择指标</Head>
        <SectionBody $h={45}>
          <TextBox $w={155} defaultValue="营业利润率" aria-label="指标" />
        </SectionBody>
        <Head tone="blue">维度</Head>
        <Tree>
          {["年月", "公司"].map((t) => (
            <TreeItem key={t}><Slot $w={20}><ExpandArrow /></Slot><Slot $w={16}><ShareIcon /></Slot>{t}</TreeItem>
          ))}
        </Tree>
        <Head tone="green">度量</Head>
        <Tree>
          {["营业利润", "营业收入", "记录数"].map((t) => (
            <TreeItem key={t}><Slot $w={20} /><Slot $w={16}><RulerIcon /></Slot>{t}</TreeItem>
          ))}
        </Tree>
        <Head tone="green" extra={
          <button aria-label="新增公式"><svg width="12" height="12" viewBox="0 0 12 12"><path d="M9 1H1v8" fill="none" stroke="#1c9f68" /><rect x="2.500" y="2.500" width="9.500" height="9.500" fill="#1c9f68" /><path d="M7.200 4.500v5.500M4.500 7.200H10" stroke="#fff" /></svg></button>
        }>自定义公式</Head>
        <Tree>
          {["同期营业利润率", "营业利润率", "营业利润"].map((t) => (
            <TreeItem key={t}><Slot $w={20} /><Slot $w={16}><Fx>fx</Fx></Slot>{t}</TreeItem>
          ))}
        </Tree>
      </Panel>
      <Watermark>头条@派可数据</Watermark>
    </Shell>
  );
}
